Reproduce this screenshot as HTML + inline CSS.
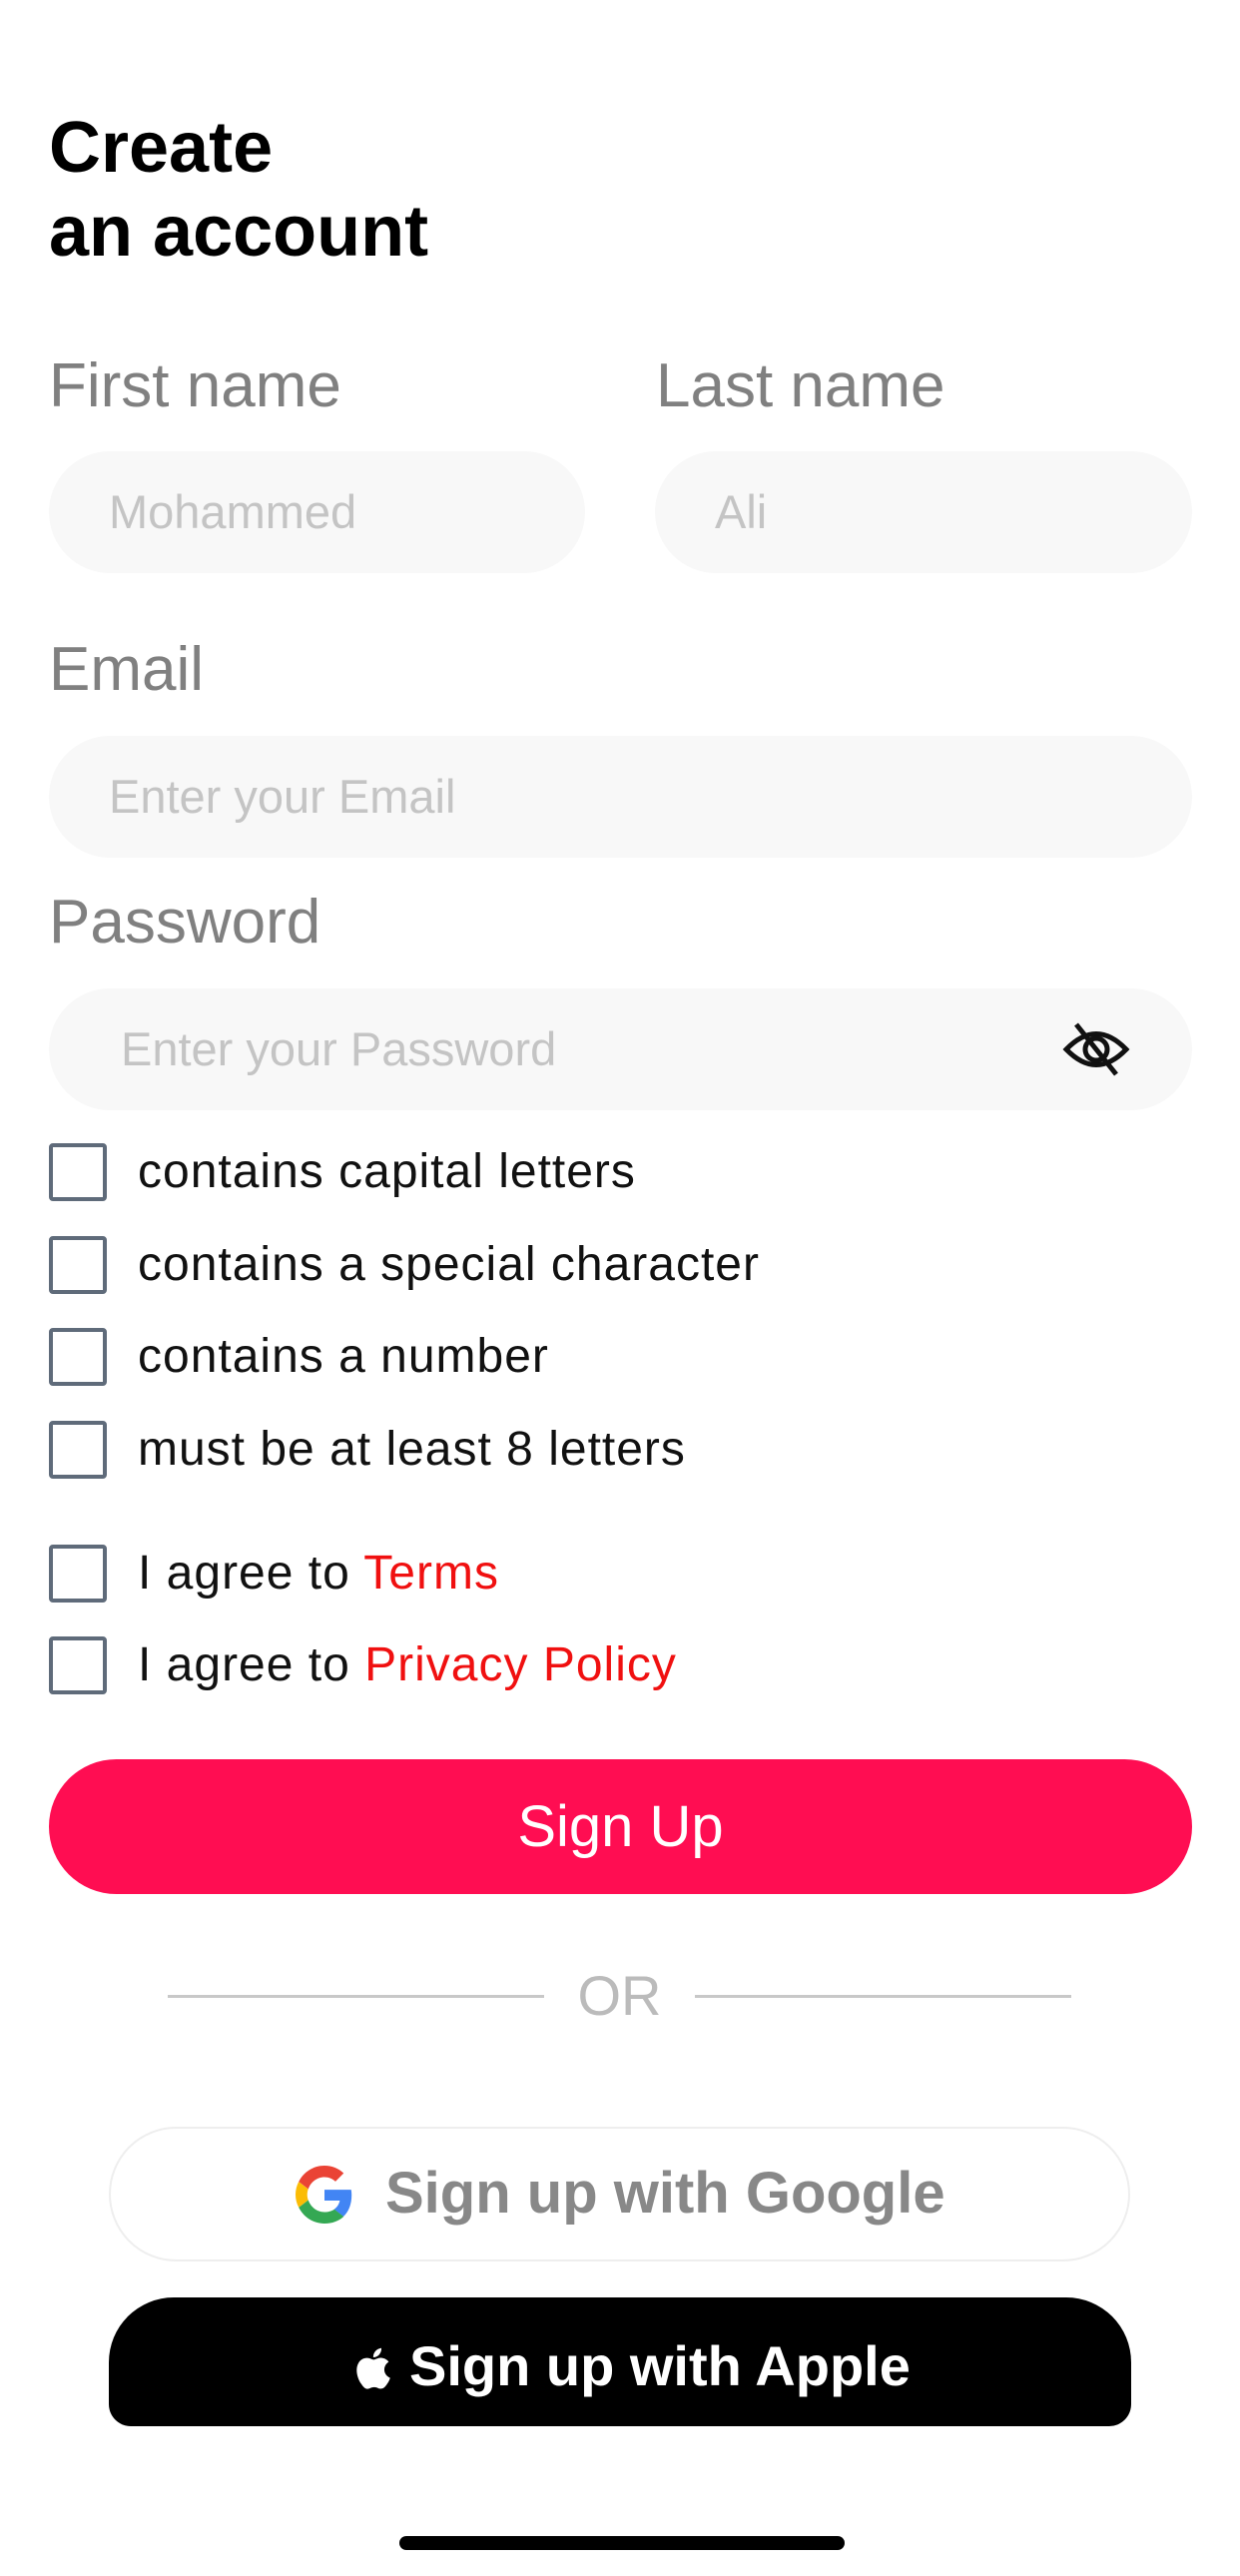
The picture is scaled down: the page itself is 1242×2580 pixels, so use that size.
<!DOCTYPE html>
<html><head><meta charset="utf-8"><style>
*{margin:0;padding:0;box-sizing:border-box}
body{width:1242px;height:2580px;background:#fff;position:relative;overflow:hidden;font-family:"Liberation Sans","DejaVu Sans",sans-serif}
.a{position:absolute}
h1{position:absolute;left:49px;top:106px;font-size:72px;line-height:84px;font-weight:700;color:#000}
.lbl{position:absolute;font-size:62px;color:#808080;font-weight:500;line-height:70px}
.inp{position:absolute;background:#f8f8f8;border-radius:61px;height:122px;color:#c4c4c4;font-size:47px;line-height:122px}
.cb{position:absolute;left:49px;width:58px;height:58px;border:4px solid #5f6b7a;border-radius:4px}
.ct{position:absolute;left:138px;font-size:48px;color:#111;line-height:58px;letter-spacing:1px}
.r{color:#f01010}
</style></head><body>
<h1>Create<br>an account</h1>
<div class="lbl" style="left:49px;top:352px">First name</div>
<div class="lbl" style="left:657px;top:352px">Last name</div>
<div class="inp" style="left:49px;top:452px;width:537px;padding-left:60px">Mohammed</div>
<div class="inp" style="left:656px;top:452px;width:538px;padding-left:60px">Ali</div>
<div class="lbl" style="left:49px;top:636px">Email</div>
<div class="inp" style="left:49px;top:737px;width:1145px;padding-left:60px">Enter your Email</div>
<div class="lbl" style="left:49px;top:889px">Password</div>
<div class="inp" style="left:49px;top:990px;width:1145px;padding-left:72px">Enter your Password</div>
<svg class="a" style="left:1064px;top:1022px" width="68" height="58" viewBox="0 0 68 58"><path d="M4 29 Q34 -2 64 29 Q34 60 4 29Z" fill="none" stroke="#111" stroke-width="5"/><circle cx="34" cy="29" r="11" fill="none" stroke="#111" stroke-width="5"/><line x1="14" y1="4" x2="54" y2="54" stroke="#111" stroke-width="5"/></svg>
<div class="cb" style="top:1145px"></div><div class="ct" style="top:1145px">contains capital letters</div>
<div class="cb" style="top:1238px"></div><div class="ct" style="top:1238px">contains a special character</div>
<div class="cb" style="top:1330px"></div><div class="ct" style="top:1330px">contains a number</div>
<div class="cb" style="top:1423px"></div><div class="ct" style="top:1423px">must be at least 8 letters</div>
<div class="cb" style="top:1547px"></div><div class="ct" style="top:1547px">I agree to <span class="r">Terms</span></div>
<div class="cb" style="top:1639px"></div><div class="ct" style="top:1639px">I agree to <span class="r">Privacy Policy</span></div>
<div class="a" style="left:49px;top:1762px;width:1145px;height:135px;border-radius:68px;background:#ff0d52;color:#fff;font-size:58px;text-align:center;line-height:135px">Sign Up</div>
<div class="a" style="left:168px;top:1998px;width:377px;height:3px;background:#c8c8c8"></div>
<div class="a" style="left:696px;top:1998px;width:377px;height:3px;background:#c8c8c8"></div>
<div class="a" style="left:545px;top:1966px;width:151px;text-align:center;font-size:56px;color:#bbb;line-height:66px">OR</div>
<div class="a" style="left:109px;top:2130px;width:1023px;height:135px;border-radius:68px;border:2px solid #eee"></div>
<svg class="a" style="left:296px;top:2169px" width="58" height="58" viewBox="0 0 48 48"><path fill="#EA4335" d="M24 9.5c3.5 0 6.6 1.2 9.1 3.6l6.8-6.8C35.8 2.4 30.3 0 24 0 14.6 0 6.6 5.4 2.7 13.3l7.9 6.1C12.5 13.7 17.8 9.5 24 9.5z"/><path fill="#4285F4" d="M46.5 24.5c0-1.6-.1-3.1-.4-4.5H24v9h12.7c-.6 3-2.2 5.5-4.7 7.2l7.7 6c4.5-4.200 6.8-10.4 6.8-17.7z"/><path fill="#FBBC05" d="M10.5 28.6c-.5-1.4-.8-3-.8-4.6s.3-3.2.8-4.6l-7.9-6.1C1 16.5 0 20.1 0 24s1 7.5 2.7 10.7l7.8-6.1z"/><path fill="#34A853" d="M24 48c6.5 0 11.9-2.1 15.9-5.8l-7.7-6c-2.1 1.4-4.9 2.3-8.2 2.3-6.2 0-11.5-4.2-13.4-9.9l-7.9 6.1C6.6 42.6 14.6 48 24 48z"/></svg>
<div class="a" style="left:386px;top:2162px;font-size:58px;font-weight:700;color:#888;line-height:70px">Sign up with Google</div>
<div class="a" style="left:109px;top:2301px;width:1024px;height:129px;border-radius:65px 65px 22px 22px;background:#000"></div>
<svg class="a" style="left:354px;top:2350px" width="38" height="44" viewBox="0 0 24 28"><path fill="#fff" d="M19.6 14.9c0-3.3 2.7-4.9 2.8-5-1.5-2.2-3.9-2.5-4.7-2.6-2-.2-3.9 1.2-4.9 1.2s-2.6-1.2-4.3-1.1C6.3 7.4 4.2 8.7 3.1 10.7c-2.3 4-.6 9.9 1.7 13.1 1.1 1.6 2.4 3.4 4.1 3.3 1.6-.1 2.3-1.1 4.3-1.1s2.5 1.1 4.3 1c1.8 0 2.9-1.6 4-3.2 1.3-1.8 1.8-3.6 1.8-3.7-.1 0-3.6-1.4-3.7-5.2zM16.4 5.2C17.3 4.1 17.9 2.6 17.7 1.1c-1.3.1-2.9.9-3.8 2-.8.9-1.5 2.5-1.3 3.9 1.4.1 2.9-.7 3.8-1.8z"/></svg>
<div class="a" style="left:410px;top:2335px;font-size:56px;font-weight:700;color:#fff;line-height:70px">Sign up with Apple</div>
<div class="a" style="left:400px;top:2540px;width:446px;height:14px;border-radius:7px;background:#000"></div>
</body></html>
